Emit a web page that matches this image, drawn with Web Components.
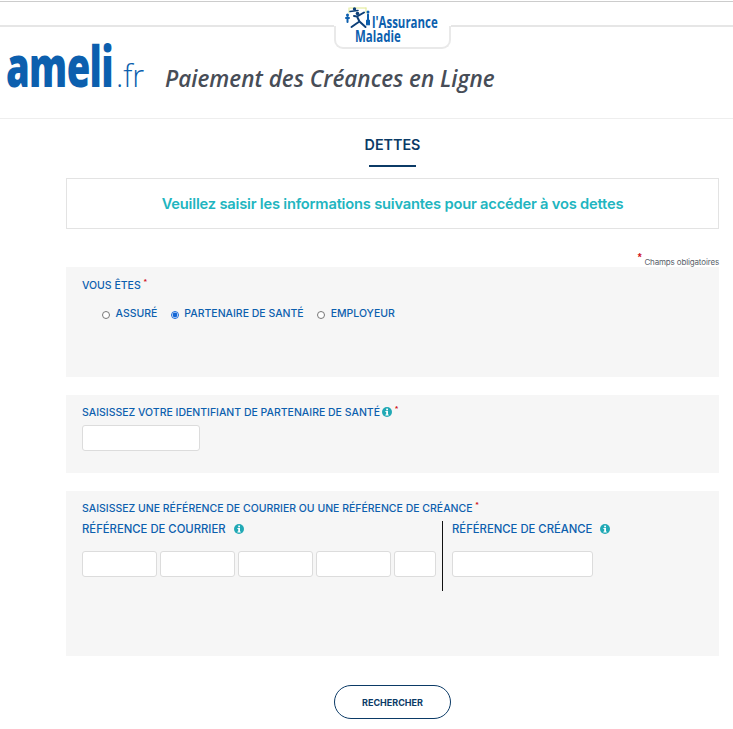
<!DOCTYPE html>
<html lang="fr">
<head>
<meta charset="utf-8">
<title>Paiement des Créances en Ligne</title>
<style>
html, body { margin: 0; padding: 0; background: #fff; height: 729px; overflow: hidden; }
body { font-family: "Inter", "Liberation Sans", sans-serif; }
</style>
</head>
<body>
<ameli-header></ameli-header>
<ameli-page>
    <ameli-panel height="110" pad="11">
        <ameli-label required>VOUS ÊTES</ameli-label>
        <ameli-radios></ameli-radios>
    </ameli-panel>
    <ameli-panel height="78" gap="18">
        <ameli-label required info>SAISISSEZ VOTRE IDENTIFIANT DE PARTENAIRE DE SANTÉ</ameli-label>
        <ameli-input width="118"></ameli-input>
    </ameli-panel>
    <ameli-panel height="165" gap="18">
        <ameli-label required>SAISISSEZ UNE RÉFÉRENCE DE COURRIER OU UNE RÉFÉRENCE DE CRÉANCE</ameli-label>
        <ameli-references></ameli-references>
    </ameli-panel>
</ameli-page>

<script>
(function () {
    const BLUE = "#0c5fae";

    class AmeliHeader extends HTMLElement {
        constructor() {
            super();
            this.attachShadow({mode: "open"});
            this.shadowRoot.innerHTML = `
            <style>
            :host { display: block; height: 119px; box-sizing: border-box; padding-top: 1px; border-bottom: 1px solid #eee; }
            .top { height: 26px; box-sizing: border-box; border-top: 1px solid #ccc; border-bottom: 2px solid #e6e6e6; padding-left: 334px; }
            .tab { width: 117px; height: 47px; background: #fff; position: relative; }
            .tab::before { content: ""; position: absolute; left: 0; right: 0; top: 24px; bottom: 0; box-sizing: border-box; border: 2px solid #e9e9e9; border-top: 0; border-radius: 0 0 9px 9px; }
            .tab svg { position: absolute; left: 11px; top: 5px; }
            .w { position: absolute; color: ${BLUE}; font: 700 15.5px/14px "Open Sans", sans-serif; transform-origin: left top; transform: scaleX(.74); white-space: nowrap; }
            .assurance { left: 38px; top: 13px; }
            .maladie { left: 21px; top: 27px; }
            .brand { display: flex; align-items: baseline; margin-top: 7px; padding-left: 6px; }
            .ameli { font: 800 57px/62px "Open Sans", sans-serif; color: ${BLUE}; display: inline-block; width: 110px; flex: none; transform-origin: left; transform: scaleX(.67); letter-spacing: -1px; }
            .fr { font: 300 32px/30px "Open Sans", sans-serif; color: ${BLUE}; display: inline-block; width: 49px; flex: none; transform-origin: left; transform: scaleX(.95); }
            h1 { margin: 0; font: italic 600 22.5px/30px "Open Sans", sans-serif; color: #474d57; white-space: nowrap; }
            </style>
            <div class="top">
                <div class="tab">
                    <svg width="26" height="22" viewBox="0 0 26 22" fill="none" stroke-linecap="round">
                        <path d="M5 1h16M21 1v5M4 1v5" stroke="#dfe88e" stroke-width="1"/>
                        <circle cx="9.500" cy="2" r="1.700" fill="#0d3f78"/>
                        <path d="M5 4.500l8 -1" stroke="#0d3f78" stroke-width="1.500"/>
                        <circle cx="2.500" cy="8" r="1.500" fill="#0c5fae"/>
                        <path d="M2.500 10v5M1 11h3" stroke="#0c5fae" stroke-width="2"/>
                        <circle cx="12.500" cy="6.500" r="1.800" fill="#0d3f78"/>
                        <path d="M9 9l3 .5 7-4M12 9.500l2.500 5M14.500 14.500l6 5.500M14.500 14.500l-3 2-5 3.500" stroke="#0d3f78" stroke-width="2"/>
                        <circle cx="23" cy="5" r="1.500" fill="#0c5fae"/>
                        <path d="M23 7.500v6M22 13.500v4M24 13.500v4" stroke="#0c5fae" stroke-width="2"/>
                    </svg>
                    <span class="w assurance">l'Assurance</span>
                    <span class="w maladie">Maladie</span>
                </div>
            </div>
            <div class="brand">
                <span class="ameli">ameli</span><span class="fr">.fr</span>
                <h1>Paiement des Créances en Ligne</h1>
            </div>
            `;
        }
    }

    class AmeliPage extends HTMLElement {
        constructor() {
            super();
            this.attachShadow({mode: "open"});
            this.shadowRoot.innerHTML = `
            <style>
            :host { display: block; width: 653px; margin-left: 66px; }
            h2 { margin: 0; padding: 16px 0 0; text-align: center; font: 600 14.3px/20px "Inter", sans-serif; color: #0b3a66; }
            .rule { width: 47px; height: 2px; background: #0b3a66; margin: 10px auto 11px 303px; }
            .intro { box-sizing: border-box; height: 51px; border: 1px solid #e3e3e3; display: flex; align-items: center; justify-content: center; font: 600 14.7px/20px "Inter", sans-serif; letter-spacing: -.2px; color: #21b5c0; }
            .mandatory { height: 38px; display: flex; justify-content: flex-end; align-items: flex-end; font: 8px/12px "Inter", sans-serif; letter-spacing: -.15px; color: #5a5f6a; }
            .mandatory i { color: #d0121b; font: 700 10px/12px "Liberation Sans", sans-serif; margin: 0 3px 3px 0; }
            .mandatory span { position: relative; top: 1px; }
            .action { display: flex; justify-content: center; padding-top: 29px; }
            button { width: 117px; height: 34px; border: 1.5px solid #0b3a66; border-radius: 17px; background: #fff; font: 700 9px/1 "Inter", sans-serif; color: #0b3a66; padding: 0; }
            </style>
            <h2>DETTES</h2>
            <div class="rule"></div>
            <div class="intro">Veuillez saisir les informations suivantes pour accéder à vos dettes</div>
            <div class="mandatory"><i>*</i><span>Champs obligatoires</span></div>
            <slot></slot>
            <div class="action"><button>RECHERCHER</button></div>
            `;
        }
    }

    class AmeliPanel extends HTMLElement {
        constructor() {
            super();
            this.attachShadow({mode: "open"});
            this.shadowRoot.innerHTML = `
            <style>
            :host { display: block; box-sizing: border-box; background: #f6f6f6; padding: 10px 16px 0; }
            </style>
            <slot></slot>
            `;
        }
        connectedCallback() {
            this.style.height = this.getAttribute("height") + "px";
            this.style.marginTop = (this.getAttribute("gap") || 0) + "px";
            if (this.hasAttribute("pad")) this.style.paddingTop = this.getAttribute("pad") + "px";
        }
    }

    class AmeliInfo extends HTMLElement {
        constructor() {
            super();
            this.attachShadow({mode: "open"});
            this.shadowRoot.innerHTML = `
            <style>
            :host { display: inline-block; width: 10px; height: 10px; vertical-align: -1px; }
            svg { display: block; }
            </style>
            <svg width="10" height="10" viewBox="0 0 10 10">
                <circle cx="5" cy="5" r="5" fill="#21a9b5"/>
                <rect x="4.200" y="1.600" width="1.800" height="1.700" fill="#fff"/>
                <path d="M3.400 4.100h2.600v3.300h.7v1H3.400v-1h.8V5.100h-.8z" fill="#fff"/>
            </svg>
            `;
        }
    }

    class AmeliLabel extends HTMLElement {
        constructor() {
            super();
            this.attachShadow({mode: "open"});
            this.shadowRoot.innerHTML = `
            <style>
            :host { display: block; font: 550 10.5px/16px "Inter", sans-serif; letter-spacing: -.01px; color: ${BLUE}; white-space: nowrap; }
            .req { color: #d0121b; font: 700 8px/1 "Liberation Sans", sans-serif; position: relative; top: -5px; margin-left: 3px; }
            ameli-info { margin-left: 2px; }
            </style>
            <slot></slot>${this.hasAttribute("info") ? "<ameli-info></ameli-info>" : ""}${this.hasAttribute("required") ? '<span class="req">*</span>' : ""}
            `;
        }
    }

    class AmeliRadios extends HTMLElement {
        constructor() {
            super();
            this.attachShadow({mode: "open"});
            const items = [["ASSURÉ", false], ["PARTENAIRE DE SANTÉ", true], ["EMPLOYEUR", false]];
            this.shadowRoot.innerHTML = `
            <style>
            :host { display: flex; gap: 13.500px; padding: 12px 0 0 20px; font: 550 10.5px/16px "Inter", sans-serif; letter-spacing: -.01px; color: ${BLUE}; }
            label { display: flex; align-items: center; gap: 5.500px; }
            input { width: 8px; height: 8px; margin: 2px 0 0; accent-color: #1467d6; }
            </style>
            ${items.map(([name, on]) => `<label><input type="radio" name="who" ${on ? "checked" : ""}>${name}</label>`).join("")}
            `;
        }
    }

    class AmeliInput extends HTMLElement {
        constructor() {
            super();
            this.attachShadow({mode: "open"});
            this.shadowRoot.innerHTML = `
            <style>
            :host { display: block; margin-top: 4px; }
            input { display: block; box-sizing: border-box; width: 100%; height: 26px; padding: 0; background: #fff; border: 1px solid #dcdcdc; border-radius: 3px; }
            </style>
            <input type="text">
            `;
        }
        connectedCallback() {
            this.style.width = this.getAttribute("width") + "px";
        }
    }

    class AmeliReferences extends HTMLElement {
        constructor() {
            super();
            this.attachShadow({mode: "open"});
            this.shadowRoot.innerHTML = `
            <style>
            :host { display: flex; height: 70px; margin-top: 4px; font: 550 11.3px/16px "Inter", sans-serif; color: ${BLUE}; white-space: nowrap; }
            .left { width: 360px; border-right: 1px solid #111; height: 70px; }
            .right { padding-left: 9px; }
            .name { height: 16px; margin-bottom: 14px; }
            ameli-info { margin-left: 5px; }
            .row { display: flex; gap: 3px; }
            ameli-input { margin: 0; }
            </style>
            <div class="left">
                <div class="name">RÉFÉRENCE DE COURRIER <ameli-info></ameli-info></div>
                <div class="row">
                    <ameli-input width="75"></ameli-input>
                    <ameli-input width="75"></ameli-input>
                    <ameli-input width="75"></ameli-input>
                    <ameli-input width="75"></ameli-input>
                    <ameli-input width="42"></ameli-input>
                </div>
            </div>
            <div class="right">
                <div class="name">RÉFÉRENCE DE CRÉANCE <ameli-info></ameli-info></div>
                <ameli-input width="141"></ameli-input>
            </div>
            `;
        }
    }

    customElements.define("ameli-info", AmeliInfo);
    customElements.define("ameli-input", AmeliInput);
    customElements.define("ameli-label", AmeliLabel);
    customElements.define("ameli-radios", AmeliRadios);
    customElements.define("ameli-references", AmeliReferences);
    customElements.define("ameli-panel", AmeliPanel);
    customElements.define("ameli-page", AmeliPage);
    customElements.define("ameli-header", AmeliHeader);
}());
</script>
</body>
</html>
